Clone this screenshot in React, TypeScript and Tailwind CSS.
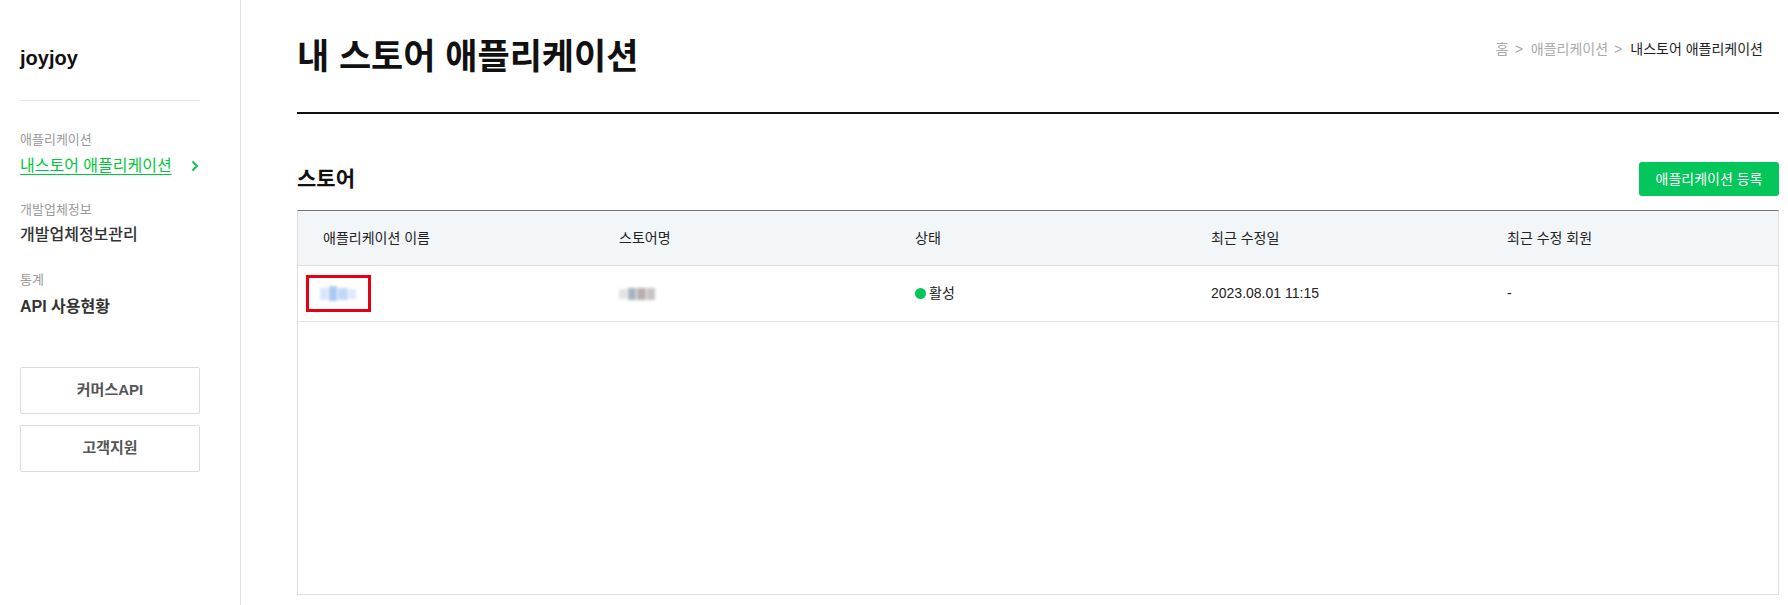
import React from 'react';

const FONT = { fontFamily: '"Liberation Sans", "Noto Sans CJK KR", sans-serif' };

const columns = ['애플리케이션 이름', '스토어명', '상태', '최근 수정일', '최근 수정 회원'];

const NavGroup: React.FC<{ label: string; children: React.ReactNode; className?: string }> = ({ label, children, className }) => (
    <div className={className}>
        <div className="text-[13px] leading-[18px] text-[#9a9a9a]">{label}</div>
        {children}
    </div>
);

const Blur: React.FC<{ tone: 'blue' | 'gray' }> = ({ tone }) => (
    <div className="flex h-[17px] w-[36px] items-center gap-[1px] blur-[1.5px]">
        {tone === 'blue' ? (
            <>
                <div className="h-[12px] w-[8px] bg-[#d9e6fa]" />
                <div className="h-[15px] w-[8px] bg-[#a9c9f2]" />
                <div className="h-[12px] w-[10px] bg-[#c3d8f6]" />
                <div className="h-[10px] w-[7px] bg-[#dde9fb]" />
            </>
        ) : (
            <>
                <div className="h-[10px] w-[8px] bg-[#e2e2e2]" />
                <div className="h-[12px] w-[8px] bg-[#a9b3bd]" />
                <div className="h-[12px] w-[10px] bg-[#b9aeae]" />
                <div className="h-[12px] w-[8px] bg-[#c4c4c4]" />
            </>
        )}
    </div>
);

const App: React.FC = () => {
    return (
        <div className="flex min-h-[605px] bg-white text-[#222]" style={FONT}>
            {/* sidebar */}
            <aside className="w-[241px] shrink-0 border-r border-[#e4e4e4] px-5 pt-[44px]">
                <div className="text-[20px] font-bold leading-[28px] text-[#111]">joyjoy</div>
                <div className="mt-[28px] w-[180px] border-t border-[#e5e5e5]" />
                <NavGroup label="애플리케이션" className="mt-[30px]">
                    <a className="mt-[6px] flex w-[180px] items-center justify-between text-[16px] leading-[22px] text-[#00c73c]">
                        <span className="underline underline-offset-[3px]">내스토어 애플리케이션</span>
                        <svg width="8" height="12" viewBox="0 0 8 12" className="mr-[1px]">
                            <path d="M1.5 1.5 6 6l-4.5 4.5" fill="none" stroke="#00c73c" strokeWidth="1.8" />
                        </svg>
                    </a>
                </NavGroup>
                <NavGroup label="개발업체정보" className="mt-[24px]">
                    <div className="mt-[5px] text-[16px] font-medium leading-[22px] text-[#333]">개발업체정보관리</div>
                </NavGroup>
                <NavGroup label="통계" className="mt-[25px]">
                    <div className="mt-[7px] text-[16px] font-bold leading-[22px] text-[#333]">API 사용현황</div>
                </NavGroup>
                <div className="mt-[49px] flex w-[180px] flex-col gap-[11px]">
                    {['커머스API', '고객지원'].map(label => (
                        <button key={label} className="h-[47px] rounded-[2px] border border-[#dcdcdc] bg-white text-[15px] font-bold text-[#555]">
                            {label}
                        </button>
                    ))}
                </div>
            </aside>

            {/* main */}
            <main className="min-w-0 flex-1 pl-[56px] pr-[9px]">
                <div className="flex items-start justify-between border-b-2 border-[#111] pb-[35px] pt-[37px]">
                    <h1 className="text-[35px] font-bold leading-[40px] text-[#111]">내 스토어 애플리케이션</h1>
                    <div className="mr-[16px] mt-[2px] flex items-center gap-[6px] text-[14px] leading-[20px] text-[#aaa]">
                        <span>홈</span>
                        <span>&gt;</span>
                        <span className="ml-[2px]">애플리케이션</span>
                        <span>&gt;</span>
                        <span className="ml-[2px] text-[#222]">내스토어 애플리케이션</span>
                    </div>
                </div>

                <div className="mt-[48px] flex items-center justify-between">
                    <h2 className="text-[21px] font-bold leading-[28px] text-[#111]">스토어</h2>
                    <button className="h-[34px] w-[140px] rounded-[3px] bg-[#03c75a] text-[14px] text-white">
                        애플리케이션 등록
                    </button>
                </div>

                <div className="mt-[14px] h-[385px] border-x border-b border-t border-x-[#dedede] border-b-[#dedede] border-t-[#777]">
                    <div className="grid h-[55px] grid-cols-5 items-center border-b border-[#e0e0e0] bg-[#f3f6f9] text-[14px]">
                        {columns.map(col => (
                            <div key={col} className="pl-[25px] text-[#222]">{col}</div>
                        ))}
                    </div>
                    <div className="grid h-[56px] grid-cols-5 items-center border-b border-[#e4e4e4] text-[14px]">
                        <div className="pl-[8px]">
                            <div className="flex h-[37px] w-[65px] items-center border-[3px] border-[#e60012] pl-[11px]">
                                <Blur tone="blue" />
                            </div>
                        </div>
                        <div className="pl-[25px]">
                            <Blur tone="gray" />
                        </div>
                        <div className="flex items-center gap-[3px] pl-[25px]">
                            <span className="h-[11px] w-[11px] rounded-full bg-[#03c75a]" />
                            <span>활성</span>
                        </div>
                        <div className="pl-[25px]">2023.08.01 11:15</div>
                        <div className="pl-[25px]">-</div>
                    </div>
                </div>
            </main>
        </div>
    );
};

export default App;
